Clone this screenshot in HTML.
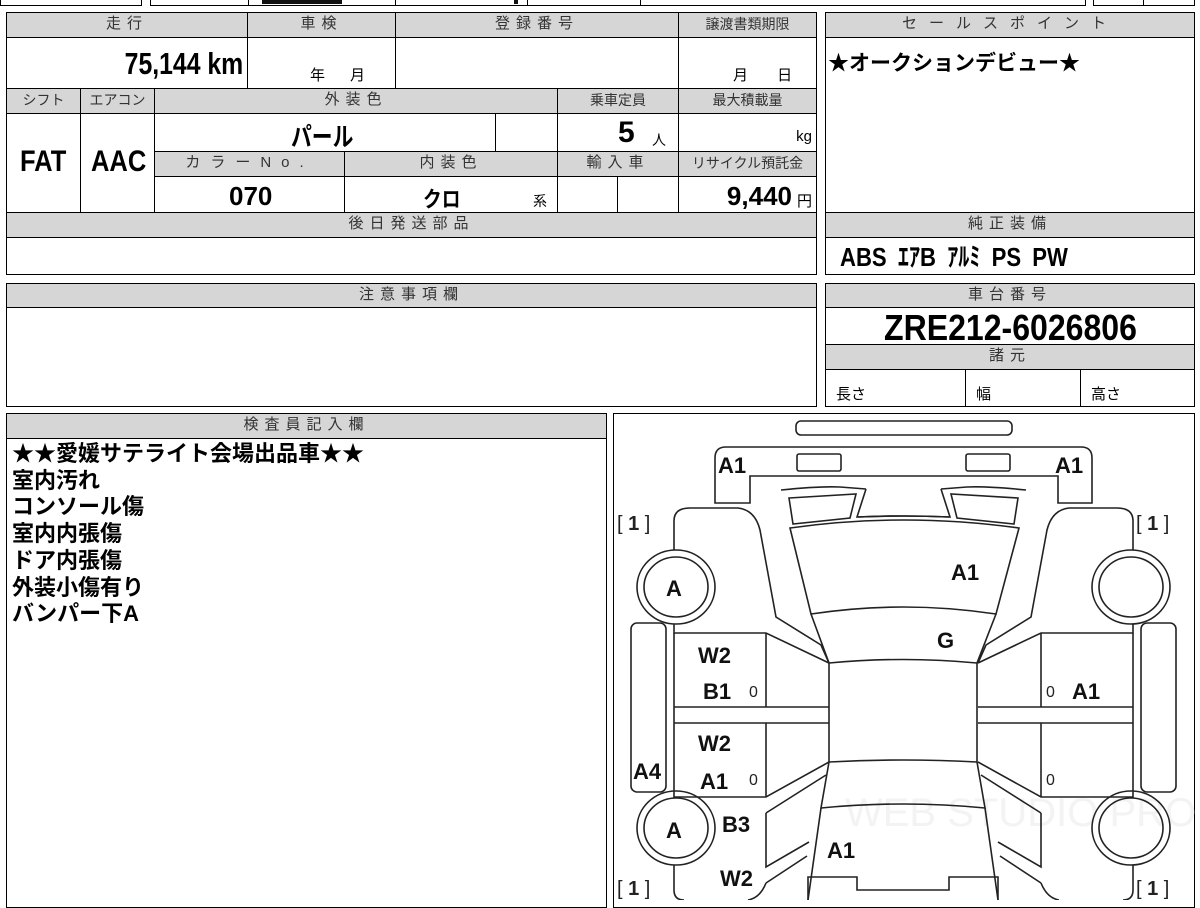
<!DOCTYPE html>
<html><head><meta charset="utf-8"><style>
*{margin:0;padding:0;box-sizing:border-box}
body{width:1200px;height:900px;overflow:hidden;background:#fff;position:relative;font-family:"Liberation Sans","Noto Sans CJK JP",sans-serif;color:#000}
.c{position:absolute;border:1px solid #000;background:#fff;overflow:hidden;white-space:nowrap}
.h{background:#d6d6d6;color:#333;font-size:15px;text-align:center;line-height:22px;letter-spacing:6px}
.h2{letter-spacing:0;font-size:14px}
.n{font-family:"Liberation Sans Narrow","Liberation Sans","Noto Sans CJK JP",sans-serif;font-weight:bold}
.t{position:absolute;white-space:nowrap}
</style></head><body>
<div class="c" style="left:0;top:-10px;width:142px;height:16px"></div>
<div class="c" style="left:150px;top:-10px;width:99px;height:16px"></div>
<div class="c" style="left:248px;top:-10px;width:148px;height:16px"></div>
<div class="c" style="left:395px;top:-10px;width:133px;height:16px"></div>
<div class="c" style="left:527px;top:-10px;width:114px;height:16px"></div>
<div class="c" style="left:640px;top:-10px;width:446px;height:16px"></div>
<div class="t" style="left:262px;top:-6px;width:80px;height:10px;background:#111"></div>
<div class="t" style="left:514px;top:-4px;width:4px;height:8px;background:#111"></div>
<div class="c" style="left:1093px;top:-10px;width:51px;height:16px"></div>
<div class="c" style="left:1143px;top:-10px;width:52px;height:16px"></div>

<div class="c h" style="left:6px;top:12px;width:242px;height:26px">走行</div>
<div class="c h" style="left:247px;top:12px;width:149px;height:26px">車検</div>
<div class="c h" style="left:395px;top:12px;width:284px;height:26px">登録番号</div>
<div class="c h h2" style="left:678px;top:12px;width:139px;height:26px">譲渡書類期限</div>
<div class="c" style="left:6px;top:37px;width:242px;height:52px"><span class="t n" style="right:4px;top:8px;font-size:31px;transform:scaleX(.8);transform-origin:right">75,144 km</span></div>
<div class="c" style="left:247px;top:37px;width:149px;height:52px"><span class="t" style="left:62px;top:26px;font-size:15px">年&nbsp;&nbsp;&nbsp;&nbsp;&nbsp;&nbsp;月</span></div>
<div class="c" style="left:395px;top:37px;width:284px;height:52px"></div>
<div class="c" style="left:678px;top:37px;width:139px;height:52px"><span class="t" style="left:54px;top:26px;font-size:15px">月&nbsp;&nbsp;&nbsp;&nbsp;&nbsp;&nbsp;&nbsp;日</span></div>

<div class="c h h2" style="left:6px;top:88px;width:75px;height:26px">シフト</div>
<div class="c h h2" style="left:80px;top:88px;width:75px;height:26px">エアコン</div>
<div class="c h" style="left:154px;top:88px;width:404px;height:26px">外装色</div>
<div class="c h h2" style="left:557px;top:88px;width:122px;height:26px">乗車定員</div>
<div class="c h h2" style="left:678px;top:88px;width:139px;height:26px">最大積載量</div>
<div class="c" style="left:6px;top:113px;width:75px;height:100px"><span class="t n" style="left:13px;top:31px;font-size:30px;transform:scaleX(.85);transform-origin:left">FAT</span></div>
<div class="c" style="left:80px;top:113px;width:75px;height:100px"><span class="t n" style="left:10px;top:31px;font-size:30px;transform:scaleX(.85);transform-origin:left">AAC</span></div>
<div class="c" style="left:154px;top:113px;width:342px;height:39px"><span class="t n" style="left:136px;top:3px;font-size:26px;transform:scaleX(.8);transform-origin:left">パール</span></div>
<div class="c" style="left:495px;top:113px;width:63px;height:39px"></div>
<div class="c" style="left:557px;top:113px;width:122px;height:39px"><span class="t n" style="left:60px;top:2px;font-size:30px">5</span><span class="t" style="left:94px;top:16px;font-size:14px">人</span></div>
<div class="c" style="left:678px;top:113px;width:139px;height:39px"><span class="t" style="right:4px;top:14px;font-size:15px">kg</span></div>
<div class="c h" style="left:154px;top:151px;width:191px;height:26px;letter-spacing:10px">カラーNo.</div>
<div class="c h" style="left:344px;top:151px;width:214px;height:26px">内装色</div>
<div class="c h" style="left:557px;top:151px;width:122px;height:26px">輸入車</div>
<div class="c h h2" style="left:678px;top:151px;width:139px;height:26px">リサイクル預託金</div>
<div class="c" style="left:154px;top:176px;width:191px;height:37px"><span class="t n" style="left:74px;top:4px;font-size:26px">070</span></div>
<div class="c" style="left:344px;top:176px;width:214px;height:37px"><span class="t n" style="left:78px;top:5px;font-size:22px;transform:scaleX(.85);transform-origin:left">クロ</span><span class="t" style="left:188px;top:14px;font-size:14px">系</span></div>
<div class="c" style="left:557px;top:176px;width:61px;height:37px"></div>
<div class="c" style="left:617px;top:176px;width:62px;height:37px"></div>
<div class="c" style="left:678px;top:176px;width:139px;height:37px"><span class="t n" style="right:24px;top:4px;font-size:26px">9,440</span><span class="t" style="right:4px;top:13px;font-size:15px">円</span></div>
<div class="c h" style="left:6px;top:212px;width:811px;height:26px">後日発送部品</div>
<div class="c" style="left:6px;top:237px;width:811px;height:38px"></div>

<div class="c h" style="left:825px;top:12px;width:370px;height:26px;letter-spacing:12px">セールスポイント</div>
<div class="c" style="left:825px;top:37px;width:370px;height:176px"><span class="t" style="left:2px;top:9px;font-size:21px;font-weight:bold">★オークションデビュー★</span></div>
<div class="c h" style="left:825px;top:212px;width:370px;height:26px">純正装備</div>
<div class="c" style="left:825px;top:237px;width:370px;height:38px"><span class="t n" style="left:14px;top:-1px;font-size:26px;transform:scaleX(.85);transform-origin:left;word-spacing:6px">ABS  ｴｱB  ｱﾙﾐ  PS  PW</span></div>

<div class="c h" style="left:6px;top:283px;width:811px;height:25px">注意事項欄</div>
<div class="c" style="left:6px;top:307px;width:811px;height:100px"></div>

<div class="c h" style="left:825px;top:283px;width:370px;height:25px">車台番号</div>
<div class="c" style="left:825px;top:307px;width:370px;height:38px"><span class="t n" style="left:58px;top:-1px;font-size:36px;transform:scaleX(.89);transform-origin:left">ZRE212-6026806</span></div>
<div class="c h" style="left:825px;top:344px;width:370px;height:26px">諸元</div>
<div class="c" style="left:825px;top:369px;width:141px;height:38px"><span class="t" style="left:10px;top:13px;font-size:15px">長さ</span></div>
<div class="c" style="left:965px;top:369px;width:116px;height:38px"><span class="t" style="left:10px;top:13px;font-size:15px">幅</span></div>
<div class="c" style="left:1080px;top:369px;width:115px;height:38px"><span class="t" style="left:10px;top:13px;font-size:15px">高さ</span></div>

<div class="c h" style="left:6px;top:413px;width:601px;height:26px">検査員記入欄</div>
<div class="c" style="left:6px;top:438px;width:601px;height:470px">
<div style="position:absolute;left:5px;top:2px;font-size:22px;font-weight:bold;line-height:26.7px">★★愛媛サテライト会場出品車★★<br>室内汚れ<br>コンソール傷<br>室内内張傷<br>ドア内張傷<br>外装小傷有り<br>バンパー下A</div>
</div>

<div class="c" style="left:613px;top:413px;width:582px;height:495px"></div>

<svg style="position:absolute;left:0;top:0" width="1200" height="900" viewBox="0 0 1200 900">
<text x="845" y="826" font-family="Liberation Sans, sans-serif" font-size="40" fill="#f3f3f3">WEB STUDIO PRO</text>
<g fill="none" stroke="#222" stroke-width="1.6">
<rect x="796" y="421" width="216" height="14" rx="5"/>
<path d="M715,503 V458 Q715,447 726,447 H1081 Q1092,447 1092,458 V503 H1058 V476 H750 V503 Z"/>
<rect x="797" y="454" width="44" height="17" rx="2"/>
<rect x="966" y="454" width="44" height="17" rx="2"/>
<path d="M790,528 Q903,512 1019,528 L996,614 Q903,600 811,614 Z"/>
<path d="M811,614 L829,663 Q903,656 977,663 L996,614"/>
<path d="M829,663 V762 M977,663 V762 M829,762 Q903,758 977,762"/>
<path d="M829,762 L821,808 Q903,800 985,808 L977,762"/>
<path d="M821,808 L808,900 M985,808 L998,900"/>
<path d="M808,900 V877 H857 V890 H949 V877 H998 V900"/>
<g id="L">
<path d="M781,490 Q820,486 840,487 L866,489"/>
<path d="M789,498 L856,494 L850,518 L793,524 Z"/>
<path d="M866,489 L857,517 Q903,515 949,517"/>
<path d="M674,550 V521 Q674,508 690,508 H738 Q755,510 760,530 L776,617 L821,645 L829,663"/>
<ellipse cx="676" cy="587" rx="39" ry="37"/>
<ellipse cx="676" cy="587" rx="32" ry="30"/>
<ellipse cx="676" cy="828" rx="39" ry="37"/>
<ellipse cx="676" cy="828" rx="32" ry="30"/>
<rect x="631" y="623" width="35" height="169" rx="6"/>
<path d="M674,624 V633 H766 L829,663"/>
<path d="M674,633 V707 H829 M674,723 H829 M674,707 V723 M766,633 V707 M766,723 V797"/>
<path d="M674,723 V797 H766 L829,762 M674,797 V792"/>
<path d="M766,813 L826,775 M766,813 V867 L809,842"/>
<path d="M674,865 V890 Q674,900 684,900 M766,883 L807,856 M748,900 Q760,898 766,883"/>
</g>
<use href="#L" transform="translate(1807,0) scale(-1,1)"/>
</g>
<g font-family="Liberation Sans, sans-serif" font-weight="bold" font-size="22" fill="#111">
<text x="718" y="473">A1</text><text x="1055" y="473">A1</text>
<text x="666" y="596">A</text>
<text x="951" y="580">A1</text>
<text x="937" y="648">G</text>
<text x="698" y="663">W2</text>
<text x="703" y="699">B1</text>
<text x="1072" y="699">A1</text>
<text x="698" y="751">W2</text>
<text x="700" y="789">A1</text>
<text x="633" y="779">A4</text>
<text x="666" y="838">A</text>
<text x="722" y="832">B3</text>
<text x="827" y="858">A1</text>
<text x="720" y="886">W2</text>
</g>
<g font-family="Liberation Sans, sans-serif" font-size="20" fill="#222">
<text x="617" y="530">[ <tspan font-weight="bold">1</tspan> ]</text>
<text x="1136" y="530">[ <tspan font-weight="bold">1</tspan> ]</text>
<text x="617" y="895">[ <tspan font-weight="bold">1</tspan> ]</text>
<text x="1136" y="895">[ <tspan font-weight="bold">1</tspan> ]</text>
<text x="749" y="697" font-size="16">0</text>
<text x="1046" y="697" font-size="16">0</text>
<text x="749" y="785" font-size="16">0</text>
<text x="1046" y="785" font-size="16">0</text>
</g>
</svg>
</body></html>
